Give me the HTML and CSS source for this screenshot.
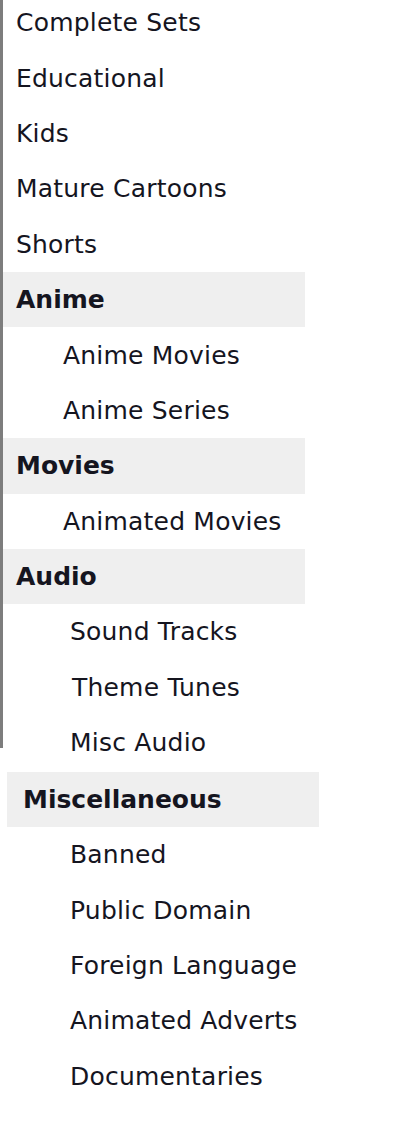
FILE: index.html
```html
<!DOCTYPE html>
<html>
<head>
<meta charset="utf-8">
<link rel="stylesheet" href="styles.css">
</head>
<body>
<div class="nav">
  <ul class="group group-main">
    <li class="item">Complete Sets</li>
    <li class="item">Educational</li>
    <li class="item">Kids</li>
    <li class="item">Mature Cartoons</li>
    <li class="item">Shorts</li>
    <li class="head">Anime</li>
    <li class="item sub">Anime Movies</li>
    <li class="item sub">Anime Series</li>
    <li class="head">Movies</li>
    <li class="item sub">Animated Movies</li>
    <li class="head">Audio</li>
    <li class="item sub2">Sound Tracks</li>
    <li class="item sub2 tt">Theme Tunes</li>
    <li class="item sub2">Misc Audio</li>
  </ul>
  <ul class="group group-misc">
    <li class="head">Miscellaneous</li>
    <li class="item sub2">Banned</li>
    <li class="item sub2">Public Domain</li>
    <li class="item sub2">Foreign Language</li>
    <li class="item sub2">Animated Adverts</li>
    <li class="item sub2">Documentaries</li>
  </ul>
</div>
</body>
</html>
```

FILE: styles.css
```css
html, body {
  margin: 0;
  padding: 0;
  background: #ffffff;
}

body {
  font-family: "DejaVu Sans", Verdana, sans-serif;
  font-size: 25px;
  color: #15151f;
  overflow: hidden;
}

.nav {
  display: flex;
  flex-direction: column;
  align-items: flex-start;
}

.group {
  list-style: none;
  margin: 0;
  padding: 0;
  display: flex;
  flex-direction: column;
}

.group-main {
  margin-top: -5px;
  height: 753px;
  width: 302px;
  border-left: 3px solid #7d7d7d;
}

.group-misc {
  margin-top: 24px;
  margin-left: 7px;
  width: 312px;
}

.item,
.head {
  height: 55.4px;
  flex: 0 0 55.4px;
  display: flex;
  align-items: center;
  white-space: nowrap;
  padding-left: 13px;
}

.item {
  letter-spacing: 0.2px;
}

.head {
  background: #efefef;
  font-weight: bold;
}

.group-misc .head {
  padding-left: 16px;
  height: 55px;
  flex-basis: 55px;
}

.sub {
  padding-left: 60px;
}

.sub2 {
  padding-left: 67px;
}

.group-misc .sub2 {
  padding-left: 63px;
}

.tt {
  padding-left: 69px;
}
```
